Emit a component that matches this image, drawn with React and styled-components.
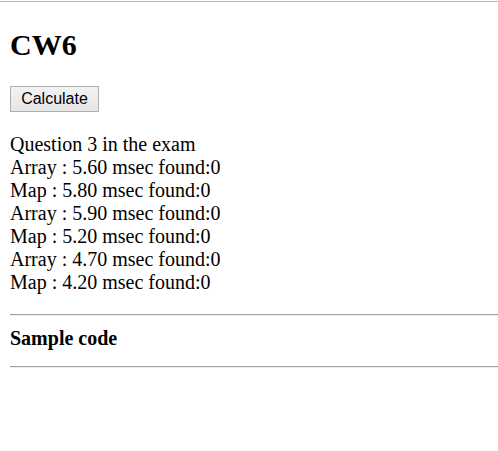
import React from 'react'
import styled, { createGlobalStyle } from 'styled-components'

const GlobalStyle = createGlobalStyle`
    html, body {
        margin: 0;
        padding: 0;
        background: #ffffff;
    }
    body {
        font-family: "Liberation Serif", "Times New Roman", serif;
        color: #000000;
        overflow: hidden;
    }
`

const Page = styled.div`
    border-top: 1px solid #b4b4b4;
    margin-top: 1px;
    padding-left: 10px;
`

const Title = styled.h1`
    font-size: 30px;
    font-weight: bold;
    margin: 0;
    padding-top: 26px;
    line-height: 34px;
`

const CalcButton = styled.button`
    margin-top: 24px;
    width: 89px;
    height: 26px;
    padding: 0;
    font-family: Arial, "Liberation Sans", sans-serif;
    font-size: 16px;
    color: #000;
    background: linear-gradient(#f2f2f2, #e6e6e6);
    border: 1px solid #adadad;
    border-radius: 0;
    display: block;
`

const Results = styled.div`
    margin-top: 21px;
    font-size: 20px;
    line-height: 23px;
`

const Line = styled.div``

const Rule = styled.hr`
    margin: ${p => p.$top}px 0 0 0;
    border: 0;
    border-top: 1px solid #a0a0a0;
    border-bottom: 1px solid #eeeeee;
    height: 0;
`

const SubTitle = styled.h3`
    font-size: 20px;
    font-weight: bold;
    margin: 11px 0 0 0;
    line-height: 23px;
`

const lines = [
    "Question 3 in the exam",
    "Array : 5.60 msec found:0",
    "Map : 5.80 msec found:0",
    "Array : 5.90 msec found:0",
    "Map : 5.20 msec found:0",
    "Array : 4.70 msec found:0",
    "Map : 4.20 msec found:0",
]

function App() {
    return (
        <Page>
            <GlobalStyle />
            <Title>CW6</Title>
            <CalcButton type="button">Calculate</CalcButton>
            <Results>
                {lines.map((l, i) => <Line key={i}>{l}</Line>)}
            </Results>
            <Rule $top={20} />
            <SubTitle>Sample code</SubTitle>
            <Rule $top={16} />
        </Page>
    )
}

export default App
